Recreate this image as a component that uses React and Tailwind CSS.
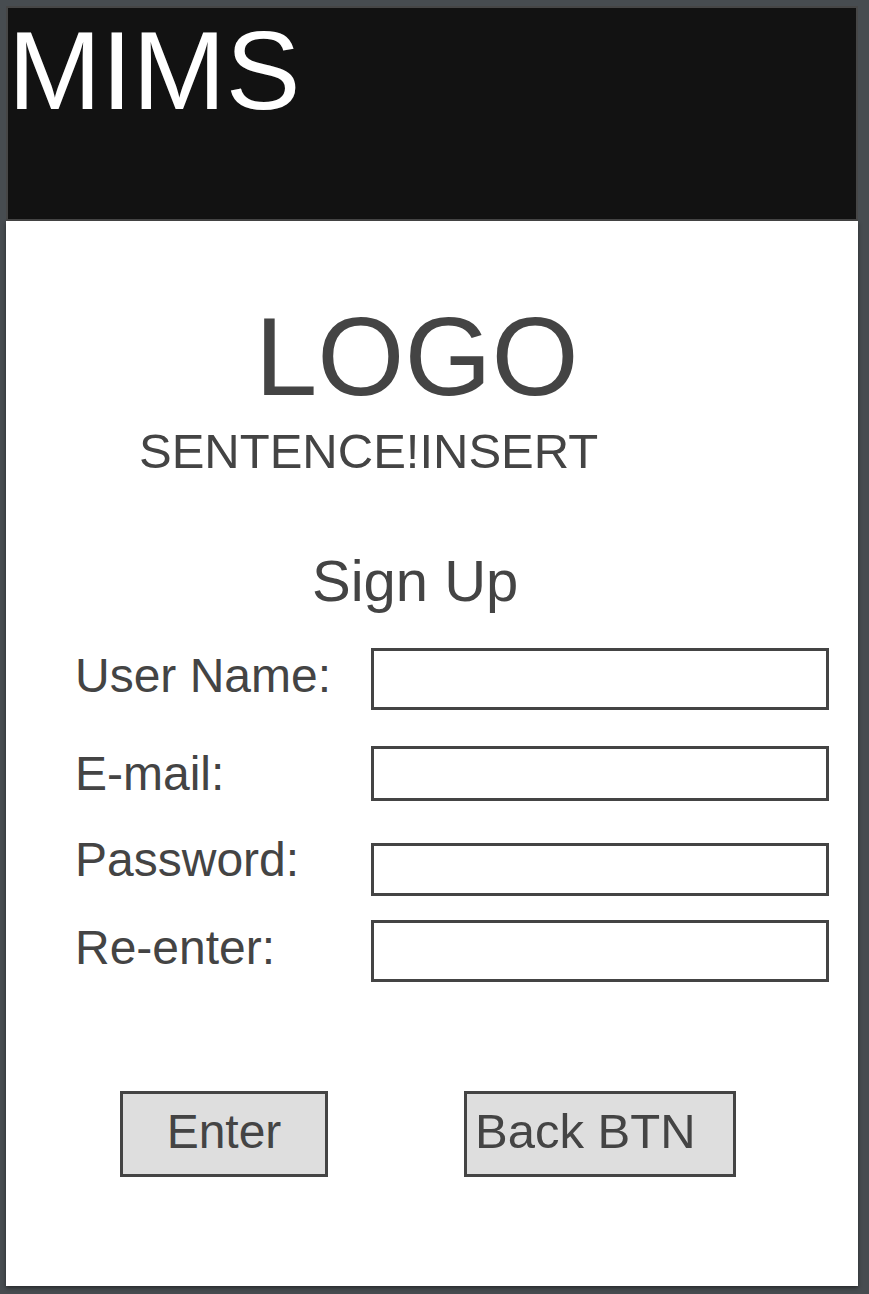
export default function App() {
  const fields = [
    { label: 'User Name:', row: 'mt-[38px]', labelTop: 'mt-[4px]', inputTop: 'mt-0', h: 'h-[62px]' },
    { label: 'E-mail:', row: 'mt-[36px]', labelTop: 'mt-[4px]', inputTop: 'mt-0', h: 'h-[55px]' },
    { label: 'Password:', row: 'mt-[35px]', labelTop: 'mt-0', inputTop: 'mt-[7px]', h: 'h-[53px]' },
    { label: 'Re-enter:', row: 'mt-[24px]', labelTop: 'mt-[4px]', inputTop: 'mt-0', h: 'h-[62px]' },
  ];

  return (
    <div className="min-h-[1294px] bg-[#474c50] p-[6px] font-['Liberation_Sans',Arial,sans-serif]">
      <div className="w-[852px]">
        <header className="h-[215px] bg-[#121212] border-2 border-[#464646]">
          <h1 className="mt-[7px] text-[112px] leading-none text-white">MIMS</h1>
        </header>

        <main className="h-[1065px] bg-white shadow-[0_2px_4px_rgba(0,0,0,0.45)] text-[#444]">
          <div className="pl-[249px] pt-[80px] text-[112px] leading-none">LOGO</div>
          <div className="pl-[133px] mt-[14px] text-[49px] leading-none">SENTENCE!INSERT</div>
          <h2 className="pl-[306px] mt-[76px] text-[58px] leading-none">Sign Up</h2>

          <form className="pl-[69px]">
            {fields.map((f) => (
              <div key={f.label} className={`flex items-start ${f.row}`}>
                <label className={`w-[296px] text-[48px] leading-none ${f.labelTop}`}>{f.label}</label>
                <input
                  type="text"
                  className={`w-[458px] ${f.h} ${f.inputTop} border-[3px] border-[#444] bg-white outline-none`}
                />
              </div>
            ))}

            <div className="flex items-start pl-[45px] mt-[109px] gap-[136px]">
              <button
                type="button"
                className="w-[208px] h-[86px] flex items-center justify-center pb-[5px] bg-[#dedede] border-[3px] border-[#444] text-[48px] leading-none"
              >
                Enter
              </button>
              <button
                type="button"
                className="w-[272px] h-[86px] flex items-center pl-[8px] pb-[5px] bg-[#dedede] border-[3px] border-[#444] text-[49px] leading-none"
              >
                Back BTN
              </button>
            </div>
          </form>
        </main>
      </div>
    </div>
  );
}
